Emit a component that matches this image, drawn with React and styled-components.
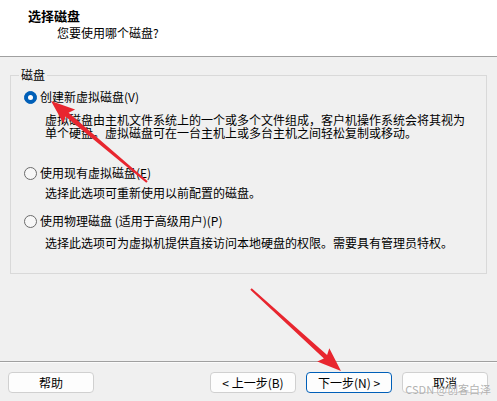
import styled, { createGlobalStyle } from 'styled-components'

const GlobalStyle = createGlobalStyle`
  html, body {
    margin: 0;
    padding: 0;
    background: #f0f0f0;
  }
  * { box-sizing: border-box; }
`

const Window = styled.div`
  position: relative;
  width: 497px;
  height: 401px;
  overflow: hidden;
  display: flex;
  flex-direction: column;
  background: #f0f0f0;
  color: #000;
  font-family: "Noto Sans CJK SC", "Noto Sans", sans-serif;
  font-size: 12px;
`

const Header = styled.div`
  height: 57px;
  flex: none;
  background: #fff;
  border-bottom: 1px solid #a0a0a0;
  padding: 8px 0 0 28px;
`

const Title = styled.div`
  font-size: 13px;
  font-weight: 700;
  line-height: 16px;
`

const Subtitle = styled.div`
  margin: 1px 0 0 29px;
  line-height: 16px;
`

const Body = styled.div`
  flex: 1;
  padding: 0 10px;
`

const Group = styled.fieldset`
  margin: 11px 0 0;
  padding: 0 0 0 13px;
  height: 206px;
  border: 1px solid #d9d9d9;
  min-width: 0;
`

const Legend = styled.legend`
  margin-left: -5px;
  padding: 0 2px;
  line-height: 14px;
`

const Option = styled.div`
  margin-top: ${p => p.$top}px;
`

const Row = styled.label`
  display: flex;
  align-items: center;
  gap: 3px;
  height: 16px;
  line-height: 16px;
  white-space: nowrap;
`

const Radio = styled.span`
  width: 13px;
  height: 13px;
  flex: none;
  border-radius: 50%;
  display: flex;
  align-items: center;
  justify-content: center;
  background: ${p => (p.$checked ? '#005fb8' : '#f7f7f7')};
  border: 1px solid ${p => (p.$checked ? '#005fb8' : '#6b6b6b')};

  &::after {
    content: '';
    width: 5px;
    height: 5px;
    border-radius: 50%;
    background: #fff;
    display: ${p => (p.$checked ? 'block' : 'none')};
  }
`

const Desc = styled.div`
  margin: ${p => p.$gap}px 0 0 21px;
  line-height: 13px;
  white-space: nowrap;
`

const Footer = styled.div`
  height: 40px;
  flex: none;
  border-top: 1px solid #a0a0a0;
  box-shadow: inset 0 1px 0 #fbfbfb;
  display: flex;
  align-items: flex-start;
  gap: 10px;
  padding: 10px 9px 0 8px;
`

const Spacer = styled.div`
  flex: 1;
`

const Button = styled.button`
  width: 86px;
  height: 21px;
  padding: 0;
  font: inherit;
  line-height: 19px;
  color: #000;
  background: #fdfdfd;
  border: 1px solid ${p => (p.$primary ? '#005fb8' : '#d0d0d0')};
  border-radius: 4px;
`

const Watermark = styled.div`
  position: absolute;
  right: 6px;
  bottom: 6px;
  font-size: 11px;
  line-height: 12px;
  color: rgba(150, 150, 150, 0.75);
  text-shadow: 0 0 1px #fff;
  pointer-events: none;
`

const Overlay = styled.svg`
  position: absolute;
  left: 0;
  top: 0;
  pointer-events: none;
`

// tapered red annotation arrow from tail to tip
const arrowPoints = (tx, ty, hx, hy) => {
  const dx = hx - tx
  const dy = hy - ty
  const len = Math.hypot(dx, dy)
  const ux = dx / len
  const uy = dy / len
  const nx = -uy
  const ny = ux
  const headLen = 21
  const headW = 9
  const bx = hx - ux * headLen
  const by = hy - uy * headLen
  const pts = [
    [tx + nx * 1.1, ty + ny * 1.1],
    [bx + nx * 2.4, by + ny * 2.4],
    [bx + nx * headW - ux * 3, by + ny * headW - uy * 3],
    [hx, hy],
    [bx - nx * headW - ux * 3, by - ny * headW - uy * 3],
    [bx - nx * 2.4, by - ny * 2.4],
    [tx - nx * 1.1, ty - ny * 1.1],
  ]
  return pts.map(p => p.map(v => v.toFixed(1)).join(',')).join(' ')
}

const App = () => {
  return (
    <>
      <GlobalStyle />
      <Window>
        <Header>
          <Title>选择磁盘</Title>
          <Subtitle>您要使用哪个磁盘?</Subtitle>
        </Header>
        <Body>
          <Group>
            <Legend>磁盘</Legend>
            <Option $top={7}>
              <Row><Radio $checked />创建新虚拟磁盘(V)</Row>
              <Desc $gap={8}>
                虚拟磁盘由主机文件系统上的一个或多个文件组成，客户机操作系统会将其视为<br />
                单个硬盘。虚拟磁盘可在一台主机上或多台主机之间轻松复制或移动。
              </Desc>
            </Option>
            <Option $top={26}>
              <Row><Radio />使用现有虚拟磁盘(E)</Row>
              <Desc $gap={5}>选择此选项可重新使用以前配置的磁盘。</Desc>
            </Option>
            <Option $top={14}>
              <Row><Radio />使用物理磁盘 (适用于高级用户)(P)</Row>
              <Desc $gap={7}>选择此选项可为虚拟机提供直接访问本地硬盘的权限。需要具有管理员特权。</Desc>
            </Option>
          </Group>
        </Body>
        <Footer>
          <Button>帮助</Button>
          <Spacer />
          <Button>&lt; 上一步(B)</Button>
          <Button $primary>下一步(N) &gt;</Button>
          <Button>取消</Button>
        </Footer>
        <Watermark>CSDN @创客白泽</Watermark>
        <Overlay width="497" height="401" viewBox="0 0 497 401">
          <polygon points={arrowPoints(147, 182, 51, 101)} fill="#e8262f" />
          <polygon points={arrowPoints(251, 289, 341, 371)} fill="#e8262f" />
        </Overlay>
      </Window>
    </>
  )
}

export default App
